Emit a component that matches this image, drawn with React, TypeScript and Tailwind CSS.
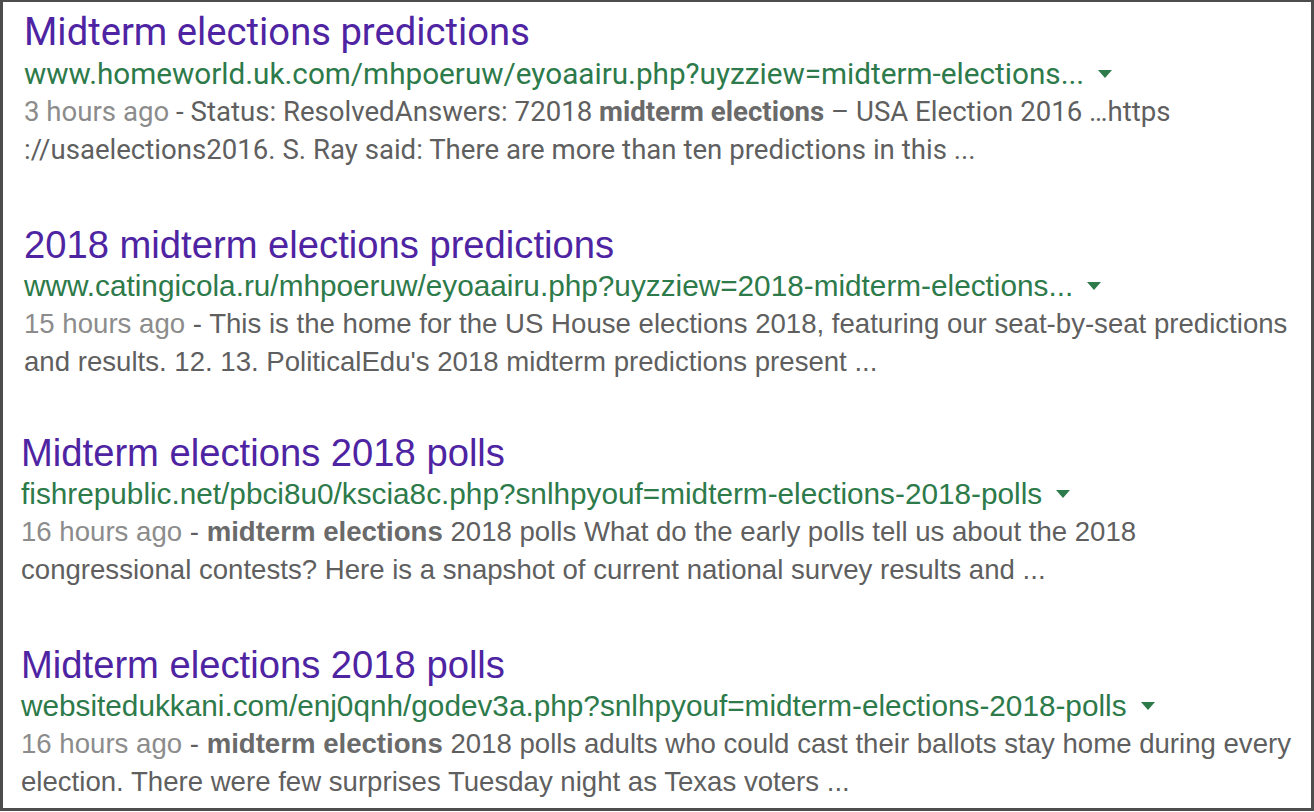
import React from "react";

const Arrow = () => (
  <span className="inline-block ml-[14px] w-0 h-0 border-l-[7px] border-r-[7px] border-t-[8px] border-l-transparent border-r-transparent border-t-[#2d7a4a] align-middle relative top-[-2px]" />
);

type R = {
  font: string;
  title: string;
  url: string;
  date: string;
  line1: React.ReactNode;
  line2: string;
  pad: string;
  mt: string;
  roboto?: boolean;
};

const B = ({ children }: { children: React.ReactNode }) => (
  <b className="font-bold text-[#6a6a6a]">{children}</b>
);

const results: R[] = [
  {
    font: "font-['Roboto',sans-serif]",
    roboto: true,
    title: "Midterm elections predictions",
    url: "www.homeworld.uk.com/mhpoeruw/eyoaairu.php?uyzziew=midterm-elections...",
    date: "3 hours ago",
    line1: (
      <>
        Status: ResolvedAnswers: 72018 <B>midterm elections</B> – USA Election 2016 …https
      </>
    ),
    line2: "://usaelections2016. S. Ray said: There are more than ten predictions in this ...",
    pad: "pl-[21px]",
    mt: "mt-[8px]",
  },
  {
    font: "font-['Liberation_Sans',Arial,sans-serif]",
    title: "2018 midterm elections predictions",
    url: "www.catingicola.ru/mhpoeruw/eyoaairu.php?uyzziew=2018-midterm-elections...",
    date: "15 hours ago",
    line1: (
      <>
        This is the home for the US House elections 2018, featuring our seat-by-seat predictions
      </>
    ),
    line2: "and results. 12. 13. PoliticalEdu's 2018 midterm predictions present ...",
    pad: "pl-[21px]",
    mt: "mt-[54px]",
  },
  {
    font: "font-['Liberation_Sans',Arial,sans-serif]",
    title: "Midterm elections 2018 polls",
    url: "fishrepublic.net/pbci8u0/kscia8c.php?snlhpyouf=midterm-elections-2018-polls",
    date: "16 hours ago",
    line1: (
      <>
        <B>midterm elections</B> 2018 polls What do the early polls tell us about the 2018
      </>
    ),
    line2: "congressional contests? Here is a snapshot of current national survey results and ...",
    pad: "pl-[18px]",
    mt: "mt-[50px]",
  },
  {
    font: "font-['Liberation_Sans',Arial,sans-serif]",
    title: "Midterm elections 2018 polls",
    url: "websitedukkani.com/enj0qnh/godev3a.php?snlhpyouf=midterm-elections-2018-polls",
    date: "16 hours ago",
    line1: (
      <>
        <B>midterm elections</B> 2018 polls adults who could cast their ballots stay home during every
      </>
    ),
    line2: "election. There were few surprises Tuesday night as Texas voters ...",
    pad: "pl-[18px]",
    mt: "mt-[54px]",
  },
];

export default function App() {
  return (
    <div className="w-[1314px] h-[812px] bg-white overflow-hidden">
      <div className="box-border h-[811px] border-t-2 border-l-[3px] border-r-[3px] border-b-[3px] border-[#4d4d4d] bg-white">
        {results.map((r, i) => (
          <div key={i} className={`${r.font} ${r.pad} ${r.mt}`}>
            <div
              className={`${r.roboto ? "text-[38.2px]" : "text-[38.2px]"} leading-[45px] text-[#4e24a3] whitespace-nowrap`}
            >
              {r.title}
            </div>
            <div
              className={`${r.roboto ? "text-[29.7px]" : "text-[29.75px]"} leading-[37px] text-[#2d7a4a] whitespace-nowrap`}
            >
              {r.url}
              <Arrow />
            </div>
            <div className="pt-[1px] text-[27.6px] leading-[37.5px] text-[#5f5f5f] whitespace-nowrap">
              <div>
                <span className="text-[#8c8c8c]">{r.date}</span> - {r.line1}
              </div>
              <div>{r.line2}</div>
            </div>
          </div>
        ))}
      </div>
    </div>
  );
}
